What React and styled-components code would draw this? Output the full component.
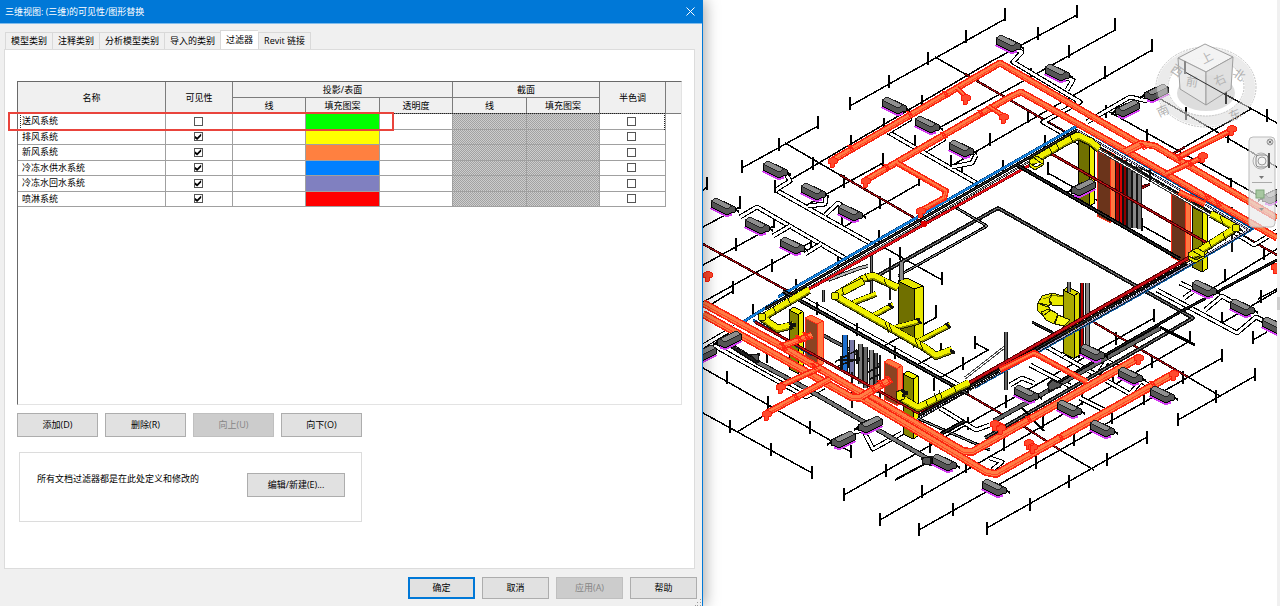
import React, { useState } from "react";
import styled, { createGlobalStyle, css } from "styled-components";

const tabs = ["模型类别", "注释类别", "分析模型类别", "导入的类别", "过滤器", "Revit 链接"];

const filters = [
  { name: "送风系统", color: "#00ff00", visible: false },
  { name: "排风系统", color: "#ffff00", visible: true },
  { name: "新风系统", color: "#ff8040", visible: true },
  { name: "冷冻水供水系统", color: "#0080ff", visible: true },
  { name: "冷冻水回水系统", color: "#8080c0", visible: true },
  { name: "喷淋系统", color: "#ff0000", visible: true },
];

// sprinkler branches
const branches = [
  "850,106 1005,19", "935,57 965,74", "742,168 818,126", "785,143 840,175",
  "790,180 922,102 990,62 1077,15", "930,133 1115,30", "951,166 1152,50",
  "842,228 920,183", "803,207 883,163", "703,227 740,207", "703,265 774,226",
  "703,302 811,242", "883,247 942,280", "1185,72 1277,123", "1157,97 1277,167",
  "1106,110 1277,206", "1167,157 1251,109", "1048,173 1173,243", "1210,290 1277,249",
  "1258,299 1277,289", "703,368 851,452", "703,413 812,473", "737,432 765,415",
  "844,495 1006,402 1154,318", "880,520 1190,341", "919,530 1222,358",
  "987,528 1147,437", "1178,420 1255,376", "1222,323 1277,291", "1253,340 1267,332",
  "882,347 937,317", "882,347 893,353", "975,343 988,350 940,378", "917,365 942,351",
  "710,305 733,291", "703,190 707,187",
];

const ticks = [
  [850, 97], [889, 75], [928, 52], [966, 30], [1005, 8], [742, 160], [779, 138], [818, 116],
  [813, 157], [851, 135], [884, 118], [922, 95], [1077, 5], [1038, 27], [1115, 18], [1069, 45],
  [1152, 39], [1105, 66], [1031, 68], [1028, 110], [990, 133], [951, 155], [842, 217], [880, 196],
  [919, 173], [844, 175], [883, 153], [740, 196], [736, 238], [774, 215], [733, 281], [772, 259],
  [811, 238], [707, 177], [796, 279], [838, 256], [879, 230], [900, 247], [942, 272], [1185, 60],
  [1226, 91], [1267, 109], [1186, 107], [1228, 130], [1147, 129], [1231, 178], [1106, 105],
  [1048, 162], [1111, 199], [1142, 218], [1172, 234], [1003, 160], [1045, 135], [1225, 269],
  [1264, 247], [1261, 290], [727, 371], [768, 396], [810, 421], [851, 445], [730, 420], [771, 443],
  [812, 466], [844, 488], [886, 464], [930, 440], [968, 417], [1006, 395], [1154, 309], [1116, 332],
  [880, 513], [922, 485], [966, 460], [1004, 438], [1043, 415], [1082, 392], [1152, 355],
  [1190, 331], [919, 523], [953, 503], [1036, 456], [1074, 433], [1112, 411], [1144, 392],
  [1183, 371], [1222, 349], [987, 522], [1030, 498], [1069, 475], [1107, 453], [1147, 431],
  [1178, 413], [1216, 390], [1255, 368], [1222, 312], [1253, 331], [753, 304], [857, 323],
  [895, 346], [936, 305], [906, 322], [941, 343], [963, 357], [934, 378], [817, 302], [975, 336],
  [767, 350], [808, 338], [962, 163], [915, 135], [775, 180], [1079, 345], [1113, 374],
];

// twin pipes feeding the fan coils
const twins = [
  "776,190 875,246", "776,190 790,181 786,174", "740,217 757,207 848,260", "773,236 790,226",
  "805,254 821,244", "888,132 978,184", "888,132 910,119 908,114", "926,150 944,139 943,132",
  "952,167 972,163 976,155", "808,206 825,204 826,196", "825,215 838,203 846,208",
  "1087,122 1130,97 1147,101", "1015,50 1022,52 1013,62 1080,102 1043,122 1085,146",
  "1065,78 1073,80 1067,90", "1157,290 1237,333 1256,317 1266,322", "1205,310 1222,296 1234,303",
  "1047,347 1130,394 1141,381 1150,386", "1062,355 1077,344", "1099,373 1107,361 1120,368",
  "855,432 863,430 873,449 902,433", "713,345 806,397 824,387", "703,346 735,327",
  "1180,283 1195,290 1184,298", "1234,232 1254,245 1277,231", "1010,385 1022,378 1034,383",
  "990,458 1002,462 992,470", "940,408 976,430 990,425", "1080,398 1108,412", "1030,365 1070,386",
];

// [points, casing color, casing width, core color, core width]
const mains = [
  ["778,297 1077,126", "#063c70", 3, "#1580dc", 2],
  ["1077,126 1253,229 1150,289 975,388", "#1c72c0", 2, "#063c70", 1],
  ["743,322 778,300", "#063c70", 3, "#1580dc", 2],
  ["753,320 812,355", "#063c70", 3, "#1580dc", 1],
  ["765,309 1077,130", "#000", 3, "#333", 1],
  ["765,313 1077,134", "#000", 2, "#999", 1],
  ["1077,130 1249,230 1140,293 915,421", "#111", 2, "#a8a8d0", 1],
  ["1077,134 1243,231", "#111", 2, "#111", 1],
  ["1080,139 1236,230", "#333", 3, "#fff", 1],
  ["804,292 1030,165", "#5c0000", 3, "#e40f18", 2],
  ["1190,257 920,411", "#5c0000", 4, "#c9101a", 2],
  ["755,322 920,414", "#5c0000", 3, "#c9101a", 1],
  ["1187,263 918,416", "#000", 3, "#333", 1],
  ["1205,252 918,420", "#111", 1, "#111", 1],
  ["1017,165 1180,259", "#000", 4, "#333", 1],
  ["783,291 968,394", "#000", 4, "#555", 1],
  ["795,292 970,389", "#000", 1, "#000", 1],
];

// lines that run behind the shafts
const backMains = [
  ["868,281 998,208 1193,318 985,438", "#111", 4, "#777", 1],
  ["955,207 987,226 898,276", "#000", 3, "#888", 1],
  ["1160,328 994,421", "#111", 5, "#666", 3],
  ["1277,260 1180,312 1050,387", "#000", 3, "#222", 1],
  ["727,343 757,362 800,385 930,460", "#111", 5, "#777", 3],
  ["728,344 757,362", "#000", 3, "#222", 2],
  ["1160,327 1195,345", "#000", 3, "#000", 1],
  ["1032,322 1055,334", "#000", 3, "#333", 1],
  ["895,480 932,460", "#000", 2, "#000", 1],
  ["828,280 860,268 868,266", "#222", 4, "#bbb", 2],
  ["817,332 880,366", "#111", 4, "#666", 2],
  ["910,415 990,450", "#000", 3, "#888", 1],
  ["930,440 965,421", "#000", 4, "#333", 1],
  ["965,378 1006,346", "#444", 3, "#fff", 1],
  ["1022,408 1044,431", "#000", 2, "#000", 1],
];

const redLines = [
  "965,74 1067,133", "840,175 925,224", "703,244 795,295", "1050,153 1207,243",
  "1233,230 1277,255", "967,394 1005,416", "1090,320 1188,377", "1017,422 1060,450",
  "1100,195 1147,185", "1122,199 1150,184", "1167,157 1185,147",
];
const redTails = ["1188,377 1220,396", "1060,450 1094,470"];

// [points, width]
const orangeDucts = [
  ["833,160 1000,63 1138,143 1155,146 1277,218", 7],
  ["866,180 1010,97 1021,92 1125,150 1277,238", 7],
  ["1125,152 1141,144", 8],
  ["897,163 946,191 944,198 920,211", 6],
  ["957,88 966,97", 5], ["988,106 1004,116", 5],
  ["1177,158 1232,130", 6], ["1166,174 1203,157", 6],
  ["1179,192 1205,204", 6],
  ["703,303 783,347 856,390 876,400 963,451 972,452 1140,357", 8],
  ["703,314 851,397 862,398 986,472 996,474 1175,373", 8],
  ["1000,370 1034,353 1087,382", 6],
  ["780,347 812,335", 7], ["780,386 820,368", 6], ["767,413 830,379", 7], ["861,397 891,379", 8],
  ["994,423 1004,427", 6], ["1028,443 1036,448", 6],
];
const ductEnds = [
  [833, 161], [866, 181], [921, 211], [966, 98], [1004, 117], [1232, 129], [1203, 156],
  [708, 275], [781, 387], [767, 414], [1139, 358], [1174, 374], [995, 424], [1001, 428],
  [1029, 443], [1033, 447], [1276, 267],
];
const couplings = [
  [850, 149], [909, 115], [945, 95], [886, 168], [943, 136], [980, 114], [1142, 147], [1178, 158],
  [1206, 197], [1217, 204], [1189, 164], [798, 339], [805, 336], [813, 367], [795, 398], [872, 389],
  [880, 384], [888, 380], [1028, 420], [1060, 438], [1152, 385], [783, 348],
];

const yellowDucts = [
  ["1030,163 1066,142 1078,136 1091,142 1099,149", 8],
  ["1192,256 1236,228 1211,214", 8],
  ["912,345 950,325", 6], ["887,330 921,321", 6], ["873,316 893,305", 6], ["853,303 876,294", 6],
  ["898,288 873,276 863,279 835,296 925,348 936,356 952,350", 8],
  ["809,290 762,318 778,329 793,325", 8],
  ["899,397 918,408 969,383", 8],
];
const yellowJoints = [
  [1051, 150], [1058, 146], [1072, 139], [1211, 245], [1225, 237], [1222, 220], [862, 280],
  [867, 277], [886, 283], [887, 326], [891, 328], [917, 343], [922, 346], [790, 302], [775, 310],
  [936, 397], [941, 394], [955, 388], [928, 405],
];

// standing shafts: x, y, front width, side width, height, front, side, edge
const shafts = [
  [1078, 140, 11, 5, 64, "#707000", "#f0f000", "#000"],
  [1097, 151, 13, 5, 68, "#6b341b", "#ff7840", "#ff2a14"],
  [1171, 194, 14, 5, 66, "#6b341b", "#ff7840", "#ff2a14"],
  [1192, 207, 10, 5, 63, "#858500", "#f0f000", "#000"],
  [898, 281, 16, 9, 59, "#707000", "#e8e800", "#000"],
  [789, 310, 9, 5, 62, "#858500", "#f0f000", "#000"],
  [805, 318, 12, 6, 46, "#8c4322", "#ff7840", "#ff2a14"],
  [884, 362, 13, 5, 40, "#8c4322", "#ff7840", "#ff2a14"],
  [903, 374, 10, 5, 63, "#858500", "#f0f000", "#000"],
  [1063, 290, 11, 5, 66, "#a8a800", "#d8d800", "#000"],
];

// risers: x, top, bottom, color, width
const risers = [
  [1117, 157, 221, "#a80000", 4], [1121, 158, 224, "#d80000", 3], [1125, 160, 226, "#8b0000", 3],
  [1129, 163, 228, "#555", 4], [1134, 166, 228, "#888", 4], [1139, 167, 229, "#777", 4],
  [845, 335, 372, "#1c6fd0", 5], [852, 340, 376, "#7878a8", 5], [860, 344, 384, "#777", 4],
  [865, 347, 388, "#666", 4], [871, 350, 390, "#888", 4], [876, 353, 393, "#555", 3],
  [880, 355, 400, "#222", 1], [1006, 332, 390, "#666", 3], [1082, 283, 346, "#b80000", 3],
  [1087, 283, 346, "#888", 4], [1069, 282, 292, "#777", 3], [871, 254, 296, "#777", 2],
  [901, 262, 280, "#888", 4], [890, 258, 300, "#111", 1], [1232, 207, 252, "#111", 1],
  [823, 290, 302, "#777", 2], [852, 372, 408, "#222", 1],
];

const coilsRight = [
  [882, 98], [915, 117], [949, 141], [763, 162], [801, 184], [838, 205], [711, 199], [745, 218],
  [780, 238], [996, 36], [1045, 65], [1192, 281], [1230, 300], [1262, 318], [1080, 345],
  [1118, 368], [1150, 387], [1014, 386], [1057, 401], [1090, 421], [932, 455], [982, 480],
];
const coilsLeft = [[1146, 85], [1117, 101], [1073, 180], [719, 332], [833, 432], [860, 417], [1264, 188], [694, 346]];

function Pipe({ points, casing, casingWidth, core, coreWidth }) {
  return (
    <>
      <polyline points={points} stroke={casing} strokeWidth={casingWidth} />
      <polyline points={points} stroke={core} strokeWidth={coreWidth} />
    </>
  );
}

function Shaft({ data }) {
  const [x, y, w, side, h, front, light, edge] = data;
  const drop = w / 2;
  return (
    <g stroke={edge} strokeWidth="1">
      <polygon points={`${x},${y} ${x + w},${y + drop} ${x + w},${y + h + drop - 3} ${x},${y + h - 3}`} fill={front} />
      <polygon
        points={`${x + w},${y + drop} ${x + w + side},${y + drop - 3} ${x + w + side},${y + h + drop - 6} ${x + w},${y + h + drop - 3}`}
        fill={light}
      />
      <polygon
        points={`${x},${y} ${x + side},${y - 3} ${x + w + side},${y + drop - 3} ${x + w},${y + drop}`}
        fill={light}
      />
    </g>
  );
}

function Coil({ x, y, flip }) {
  return (
    <g transform={flip ? `translate(${x + 22} ${y}) scale(-1 1)` : `translate(${x} ${y})`}>
      <polyline points="0,8 15,16 21,15" stroke="#d23cf0" strokeWidth="4" />
      <polygon points="0,2 5,-1 24,8 24,13 20,14 16,16 0,8" fill="#555" stroke="#000" />
      <polygon points="0,2 5,-1 21,7 16,10" fill="#8f8f8f" stroke="#222" />
      <polyline points="24,10 28,13" stroke="#000" strokeWidth="2" />
    </g>
  );
}

function ViewCube() {
  return (
    <g>
      <g fill="none" opacity="0.6">
        <ellipse cx="1206" cy="87" rx="44" ry="34" stroke="#dedede" strokeWidth="10" />
        <ellipse cx="1206" cy="87" rx="50" ry="40" stroke="#9c9c9c" strokeDasharray="2 1" />
        <ellipse cx="1206" cy="87" rx="38" ry="29" stroke="#9c9c9c" strokeDasharray="2 1" />
      </g>
      <ellipse cx="1206" cy="93" rx="29" ry="18" fill="#aaa" opacity="0.4" />
      <g stroke="#999" strokeWidth="1" opacity="0.93">
        <polygon points="1178,58 1205,44 1233,57 1206,72" fill="#f4f4f4" />
        <polygon points="1178,58 1206,72 1206,105 1180,89" fill="#e8e8e8" />
        <polygon points="1206,72 1233,57 1231,89 1206,105" fill="#dedede" />
      </g>
      <g fill="#b4b4b4" fontSize="12" textAnchor="middle">
        <text x="1207" y="62" transform="rotate(-28 1207 58)">上</text>
        <text x="1192" y="86" transform="rotate(10 1192 82)">前</text>
        <text x="1220" y="84" transform="rotate(-25 1220 80)">右</text>
      </g>
      <g fill="#b0b0b0" fontSize="12" textAnchor="middle">
        <text x="1177" y="75" transform="rotate(35 1177 71)">西</text>
        <text x="1239" y="79" transform="rotate(35 1239 75)">北</text>
        <text x="1163" y="115" transform="rotate(-25 1163 111)">南</text>
        <text x="1235" y="119" transform="rotate(-25 1235 115)">东</text>
      </g>
      <g stroke="#333" fill="none">
        <polyline points="1185,72 1235,100" />
        <path d="M1185 61V74" stroke="#888" strokeWidth="2" />
      </g>
    </g>
  );
}

function NavBar() {
  return (
    <g fill="none" stroke="#999">
      <rect x="1249" y="137" width="26" height="90" rx="4" fill="#eaeaea" fillOpacity="0.7" stroke="#bbb" />
      <circle cx="1270" cy="142" r="3" fill="#ddd" />
      <path d="M1268.500 140.500l3 3M1271.500 140.500l-3 3" stroke="#777" />
      <circle cx="1261" cy="161" r="8" stroke="#b0b0b0" />
      <rect x="1256" y="155" width="12" height="12" rx="3" fill="#eee" stroke="#888" />
      <circle cx="1262" cy="161" r="4" stroke="#999" fill="#f6f6f6" />
      <path d="M1269 153v15" stroke="#555" strokeWidth="2" />
      <path d="M1259 176h5l-2.500 3z" fill="#777" stroke="none" />
      <path d="M1252 182.500h20" stroke="#aaa" />
      <rect x="1256" y="190" width="8" height="8" fill="#a7c7a0" stroke="#7fa57a" />
      <path d="M1259 208h5l-2.500 3z" fill="#999" stroke="none" />
    </g>
  );
}

function Model() {
  return (
    <Drawing viewBox="703 0 574 606" preserveAspectRatio="xMinYMin slice" role="img" aria-label="三维">
      <g fill="none" strokeLinejoin="round" shapeRendering="crispEdges">
        <g stroke="#000" strokeWidth="1.500">
          {branches.map((p) => <polyline key={p} points={p} />)}
        </g>
        <path d={ticks.map(([x, y]) => `M${x} ${y}v13`).join("")} stroke="#000" strokeWidth="1.600" />
        {redLines.map((p) => (
          <Pipe key={p} points={p} casing="#200" casingWidth={2.4} core="#a80d12" coreWidth={1} />
        ))}
        <g stroke="#000" strokeWidth="1.500">
          {redTails.map((p) => <polyline key={p} points={p} />)}
        </g>
        {twins.map((p) => (
          <Pipe key={p} points={p} casing="#000" casingWidth={5} core="#fff" coreWidth={2.8} />
        ))}
        {backMains.map((m) => (
          <Pipe key={m[0]} points={m[0]} casing={m[1]} casingWidth={m[2]} core={m[3]} coreWidth={m[4]} />
        ))}
        {shafts.map((s) => <Shaft key={s[0]} data={s} />)}
        {risers.map(([x, top, bottom, color, w]) => (
          <g key={`${x}-${top}`}>
            <path d={`M${x} ${top}V${bottom}`} stroke="#111" strokeWidth={w + 1} />
            <path d={`M${x} ${top}V${bottom}`} stroke={color} strokeWidth={w - 1} />
          </g>
        ))}
        {mains.map((m) => (
          <Pipe key={m[0]} points={m[0]} casing={m[1]} casingWidth={m[2]} core={m[3]} coreWidth={m[4]} />
        ))}
        <Pipe points="1050,153 1207,243" casing="#400" casingWidth={3} core="#c01018" coreWidth={1} />
        <g stroke="#111" strokeWidth="1.500">
          <path d="M835 362l22-12M838 366l22-8M841 356v14M848 352v16M857 350v14M838 360h22" />
          <path d="M868 372l12-6M870 379l10-5M1140 168l14 6M1142 174l14 6M1150 170v12" />
          <path d="M750 355l9-1-1 8zM922 458l9-1 0 8-8-1zM1048 384l4-4 10 4-2 3-11 4z" fill="#555" />
        </g>
        {yellowDucts.map(([p, w]) => (
          <g key={p}>
            <Pipe points={p} casing="#1a1a00" casingWidth={w} core="#8c8c00" coreWidth={w - 2} />
            <polyline points={p} stroke="#f0f000" strokeWidth={w - 3} transform="translate(0 -1)" />
          </g>
        ))}
        <path
          d={yellowJoints.map(([x, y]) => `M${x - 2} ${y - 4}l3 8`).join("")}
          stroke="#222200"
        />
        <g stroke="#222200" fill="#e9e900">
          <path d="M1029 160l8-4 6 4v5l-8 5-6-4zM1034 158l7 5M1029 163l7 4 7-4M1188 253l9-5 7 4v6l-9 5-7-4zM1193 251l8 5M1188 256l8 4 8-4" />
          <path d="M842 288l20-10 3 6-21 11z" />
          <path d="M1063 296l-11-3-3 8 3 4 11 1zM1052 293l-10 3-4 7 9 4 5-4-3-3zM1038 303l-1 7 6 6 8-6-4-5zM1041 312l5 8 8 4 4-10-9-5z" />
          <path d="M1063 297l-11-2M1052 296l-9 3" stroke="#777700" />
          <path d="M1055 324l3-9 12 5-6 6z" fill="#ffff20" />
          <circle cx="1236" cy="228" r="4" />
          <circle cx="835" cy="296" r="4" />
          <circle cx="762" cy="317" r="4" />
          <path d="M896 392l5-2 3 3v6l-5 2-3-3z" />
        </g>
        <path
          d="M789 323l7 3M789 328l7-4M946 323l4 5M950 350l5 3M888 304l5 4M917 318l4 6M901 390l7 4M902 396l6-4"
          stroke="#111" strokeWidth="3"
        />
        {orangeDucts.map(([p, w]) => (
          <g key={p}>
            <Pipe points={p} casing="#fb2410" casingWidth={w} core="#ff7d45" coreWidth={w - 3} />
            <polyline points={p} stroke="#ff4a28" strokeWidth="1" transform="translate(0 1)" />
          </g>
        ))}
        <path
          d={couplings.map(([x, y]) => `M${x - 2} ${y - 4}l4 7M${x} ${y - 4}l4 6`).join("")}
          stroke="#ff2412" strokeWidth="1.500"
        />
        <path
          d={ductEnds.map(([x, y]) => `M${x - 4} ${y - 2}l4-2 4 2v4l-3 1v3h-4v-4h-2z`).join("")}
          fill="#ff4a2c" stroke="#fb1e0c"
        />
        <circle cx="924" cy="224" r="3" fill="#e00000" />
        {coilsRight.map(([x, y]) => <Coil key={`${x}-${y}`} x={x} y={y} />)}
        {coilsLeft.map(([x, y]) => <Coil key={`${x}-${y}`} x={x} y={y} flip />)}
      </g>
      <ViewCube />
      <NavBar />
    </Drawing>
  );
}

export default function App() {
  const [active, setActive] = useState("过滤器");
  const [rows, setRows] = useState(filters);

  const toggle = (name) =>
    setRows(rows.map((r) => (r.name === name ? { ...r, visible: !r.visible } : r)));

  return (
    <>
      <GlobalStyle />
      <Screen>
        <Dialog>
          <TitleBar>
            <Title>三维视图: (三维)的可见性/图形替换</Title>
            <CloseButton aria-label="关闭">
              <svg width="9" height="9" viewBox="0 0 9 9" stroke="#fff" strokeWidth="1">
                <path d="M0.500 0.500l8 8M8.500 0.500l-8 8" />
              </svg>
            </CloseButton>
          </TitleBar>
          <Tabs role="tablist">
            {tabs.map((t) => (
              <Tab key={t} role="tab" $active={t === active} aria-selected={t === active} onClick={() => setActive(t)}>
                {t}
              </Tab>
            ))}
          </Tabs>
          <Panel>
            <ListBox>
              <Table>
                <colgroup>
                  <Col $w={148} />
                  <Col $w={67} />
                  <Col $w={73} />
                  <Col $w={74} />
                  <Col $w={73} />
                  <Col $w={74} />
                  <Col $w={73} />
                  <Col $w={66} />
                  <col />
                </colgroup>
                <thead>
                  <tr>
                    <Th rowSpan={2}>名称</Th>
                    <Th rowSpan={2}>可见性</Th>
                    <Th colSpan={3}>投影/表面</Th>
                    <Th colSpan={2}>截面</Th>
                    <Th rowSpan={2}>半色调</Th>
                    <Th rowSpan={2} $last />
                  </tr>
                  <tr>
                    <Th>线</Th>
                    <Th>填充图案</Th>
                    <Th>透明度</Th>
                    <Th>线</Th>
                    <Th>填充图案</Th>
                  </tr>
                </thead>
                <tbody>
                  {rows.map((r) => (
                    <tr key={r.name}>
                      <NameCell>{r.name}</NameCell>
                      <CheckCell>
                        <Check type="checkbox" aria-label={`${r.name} 可见性`} checked={r.visible} onChange={() => toggle(r.name)} />
                      </CheckCell>
                      <Td />
                      <Swatch $color={r.color} />
                      <Td />
                      <Hatched />
                      <Hatched />
                      <CheckCell>
                        <Check type="checkbox" aria-label={`${r.name} 半色调`} />
                      </CheckCell>
                      <EmptyCell />
                    </tr>
                  ))}
                </tbody>
              </Table>
              <Focus />
              <Highlight />
            </ListBox>
            <Actions>
              <Button>添加(D)</Button>
              <Button>删除(R)</Button>
              <Button disabled>向上(U)</Button>
              <Button>向下(O)</Button>
            </Actions>
            <GroupBox>
              <Note>所有文档过滤器都是在此处定义和修改的</Note>
              <Button $wide>编辑/新建(E)...</Button>
            </GroupBox>
          </Panel>
          <Footer>
            <FooterButton $primary>确定</FooterButton>
            <FooterButton>取消</FooterButton>
            <FooterButton disabled>应用(A)</FooterButton>
            <FooterButton>帮助</FooterButton>
            <Grip viewBox="0 0 7 7">
              <path d="M5 0h1v1h-1zM2 3h1v1h-1zM5 3h1v1h-1zM0 6h1v1h-1zM2 6h1v1h-1zM5 6h1v1h-1z" fill="#999" />
            </Grip>
          </Footer>
        </Dialog>
        <Viewport>
          <Model />
        </Viewport>
        <ScrollTrack>
          <ScrollThumb />
        </ScrollTrack>
      </Screen>
    </>
  );
}

const GlobalStyle = createGlobalStyle`
  * {
    box-sizing: border-box;
  }
  body {
    margin: 0;
    background: #fff;
    color: #000;
    font-family: "Open Sans", "Noto Sans CJK SC", sans-serif;
    font-size: 9px;
    line-height: 12px;
  }
  button, input {
    font: inherit;
    color: inherit;
  }
`;

const Screen = styled.div`
  display: flex;
  min-height: 100vh;
`;

const Dialog = styled.section`
  flex: 0 0 calc(55% - 1px);
  display: flex;
  flex-direction: column;
  background: #f0f0f0;
  border-right: 1px solid #0078d7;
  box-shadow: 2px 0 14px rgba(0, 0, 0, 0.35);
  z-index: 1;
`;

const TitleBar = styled.header`
  display: flex;
  align-items: center;
  justify-content: space-between;
  height: 24px;
  padding: 0 7px 0 5px;
  background: #0078d7;
  border-bottom: 1px solid #7fbcec;
  color: #fff;
`;

const Title = styled.h1`
  margin: 0;
  font-size: 9px;
  font-weight: 400;
`;

const CloseButton = styled.button`
  display: flex;
  padding: 0;
  border: 0;
  background: none;
`;

const Tabs = styled.div`
  display: flex;
  align-items: flex-end;
  height: 25px;
  padding-left: 5px;
`;

const Tab = styled.button`
  height: 17px;
  padding: 0 5px;
  border: 1px solid #d9d9d9;
  border-width: 1px 0 0 1px;
  background: #f0f0f0;
  &:last-child {
    border-right-width: 1px;
  }
  ${(p) =>
    p.$active &&
    css`
      height: 20px;
      margin-bottom: -1px;
      padding-bottom: 2px;
      background: #fff;
    `}
`;

const Panel = styled.main`
  flex: 1;
  display: flex;
  flex-direction: column;
  margin: 0 7px 0 4px;
  padding: 31px 12px 46px;
  background: #fff;
  border: 1px solid #dcdcdc;
`;

const ListBox = styled.div`
  position: relative;
  flex: 1;
  border: 1px solid #e3e3e3;
  border-top-color: #696969;
  border-left-color: #696969;
`;

const Table = styled.table`
  width: 100%;
  height: 125px;
  table-layout: fixed;
  border-collapse: separate;
  border-spacing: 0;
`;

const Col = styled.col`
  width: ${(p) => p.$w}px;
`;

const Th = styled.th`
  height: 16px;
  padding: 0;
  background: #f0f0f0;
  border-right: ${(p) => (p.$last ? 0 : "1px solid #7c7c7c")};
  border-bottom: 1px solid #7c7c7c;
  font-weight: 400;
  line-height: 10px;
`;

const Td = styled.td`
  padding: 0;
  border-right: 1px solid #a0a0a0;
  border-bottom: 1px solid #a0a0a0;
  text-align: center;
  line-height: 10px;
`;

const NameCell = styled(Td)`
  padding-left: 4px;
  text-align: left;
`;

const CheckCell = styled(Td)`
  padding-right: 2px;
`;

const Swatch = styled(Td)`
  background: ${(p) => p.$color};
`;

const Hatched = styled(Td)`
  background: repeating-conic-gradient(#a2a2a2 0 25%, #cdcdcd 0 50%) 0 0 / 2px 2px;
`;

const EmptyCell = styled.td`
  padding: 0;
`;

const Check = styled.input`
  appearance: none;
  display: block;
  position: relative;
  width: 9px;
  height: 9px;
  margin: 0 auto;
  border: 1px solid #555;
  background: #fff;
  &:checked::after {
    content: "";
    position: absolute;
    inset: 0;
    background: #000;
    clip-path: polygon(5% 35%, 38% 60%, 95% 5%, 95% 40%, 38% 98%, 5% 70%);
  }
`;

const Focus = styled.div`
  position: absolute;
  left: 2px;
  right: 16px;
  top: 31px;
  height: 17px;
  border: 1px dotted #222;
  border-bottom: 0;
  pointer-events: none;
`;

const Highlight = styled.div`
  position: absolute;
  left: -10px;
  top: 30px;
  width: 386px;
  height: 19px;
  border: 2px solid #e9443c;
  pointer-events: none;
`;

const Actions = styled.div`
  display: flex;
  gap: 7px;
  margin-top: 8px;
`;

const Button = styled.button`
  width: ${(p) => (p.$wide ? 98 : 81)}px;
  height: 24px;
  padding: 0;
  border: 1px solid #adadad;
  background: #e1e1e1;
  &:disabled {
    background: #ccc;
    border-color: #bfbfbf;
    color: #858585;
  }
`;

const FooterButton = styled(Button)`
  width: 67px;
  height: 22px;
  ${(p) => p.$primary && "border: 2px solid #0078d7;"}
`;

const GroupBox = styled.div`
  display: flex;
  align-items: flex-start;
  justify-content: space-between;
  width: 343px;
  height: 70px;
  margin: 15px 0 0 2px;
  padding: 20px 16px 0 17px;
  border: 1px solid #dcdcdc;
`;

const Note = styled.p`
  margin: 0;
`;

const Footer = styled.footer`
  position: relative;
  display: flex;
  justify-content: flex-end;
  gap: 7px;
  padding: 8px 5px 7px;
`;

const Grip = styled.svg`
  position: absolute;
  right: 0;
  bottom: 0;
  width: 7px;
  height: 7px;
`;

const Viewport = styled.section`
  flex: 1;
  min-width: 0;
`;

const Drawing = styled.svg`
  display: block;
  width: 100%;
  height: auto;
`;

const ScrollTrack = styled.div`
  flex: 0 0 3px;
  display: flex;
  align-items: center;
  background: #f0f0f0;
`;

const ScrollThumb = styled.div`
  width: 100%;
  height: 13px;
  background: #cdcdcd;
`;
